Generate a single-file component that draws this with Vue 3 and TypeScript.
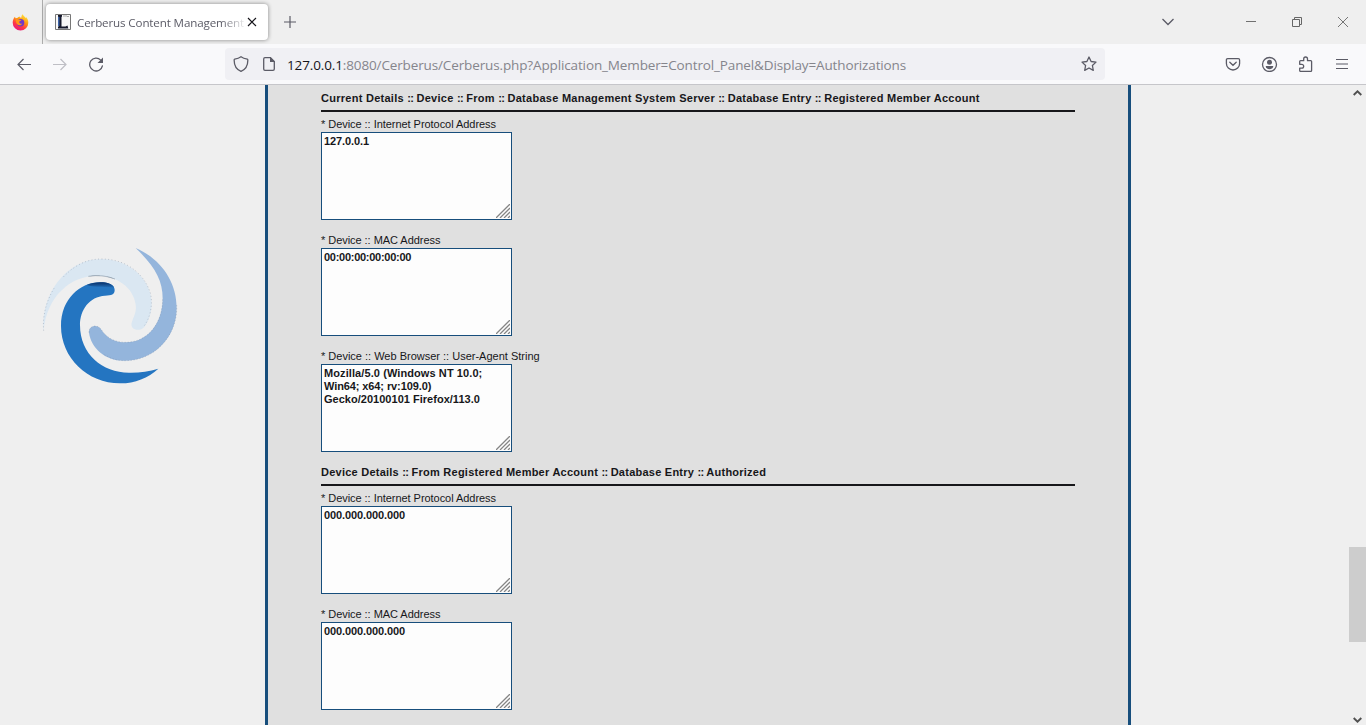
<script setup lang="ts">
interface Field {
  label: string
  lines: string[]
  kind: string
}
interface Section {
  title: string[]
  kind: string
  fields: Field[]
}

const sections: Section[] = [
  {
    title: [
      'Current Details ',
      ' Device ',
      ' From ',
      ' Database Management System Server ',
      ' Database Entry ',
      ' Registered Member Account',
    ],
    kind: 'current',
    fields: [
      { label: '* Device :: Internet Protocol Address', lines: ['127.0.0.1'], kind: 'ip' },
      { label: '* Device :: MAC Address', lines: ['00:00:00:00:00:00'], kind: 'mac' },
      {
        label: '* Device :: Web Browser :: User-Agent String',
        lines: ['Mozilla/5.0 (Windows NT 10.0;', 'Win64; x64; rv:109.0)', 'Gecko/20100101 Firefox/113.0'],
        kind: 'agent',
      },
    ],
  },
  {
    title: ['Device Details ', ' From Registered Member Account ', ' Database Entry ', ' Authorized'],
    kind: 'authorized',
    fields: [
      { label: '* Device :: Internet Protocol Address', lines: ['000.000.000.000'], kind: 'ip' },
      { label: '* Device :: MAC Address', lines: ['000.000.000.000'], kind: 'ip' },
    ],
  },
]
</script>

<template>
  <div class="window">
    <header class="tabs">
      <div class="pinned">
        <svg width="17" height="17" viewBox="0 0 17 17">
          <defs>
            <linearGradient id="fire" x1="0.8" y1="0" x2="0.25" y2="1">
              <stop offset="0" stop-color="#fff04a" />
              <stop offset="0.4" stop-color="#ff980e" />
              <stop offset="0.7" stop-color="#ff3647" />
              <stop offset="1" stop-color="#e31587" />
            </linearGradient>
          </defs>
          <path d="M.7 8.5C.7 6 1.8 4 3 2.7l.5 1.6 1.7-.2C6 3 7 2.5 7.700 2.400L8 3.500 9.500 3.500C9.200 2 10 .8 10.900.2c.3 1.800 2 2.500 3 3.900.2-.3.200-.7.100-1C15.500 4.500 16.300 6.500 16.300 8.700a7.800 7.800 0 0 1-15.600 0z" fill="url(#fire)" />
          <circle cx="8.600" cy="8.800" r="3.700" fill="#7139c9" />
          <path d="M3.500 5.500c1.500-.8 2.600-.4 3.600.3l2.300.3c-.3 1-1.600 1.200-2.100 1.500-.3 1.700 1 2.600 3 1.800-1 2.200-4 2.300-5.300.6-1-1.200-1-2.800-1.500-4.500z" fill="#ff9519" />
        </svg>
      </div>
      <div class="tab">
        <svg class="favicon" width="16" height="16" viewBox="0 0 16 16">
          <path d="M.5.5h15v15H.5z" fill="#f7f7f7" stroke="#777" />
          <path d="M3 1h4v1.500L6.500 3v9.500h4l2-1 .8 3H3V13l.5-.5V3L3 2.500z" fill="#15182b" />
          <path d="M3 3h1.500v9H3z" fill="#3d63a8" />
          <path d="M8 2h4M12 2.500h2" stroke="#aaa" />
        </svg>
        <span class="tab-title">Cerberus Content Management</span>
        <svg class="close" width="10" height="10" viewBox="0 0 10 10"><path d="M1 1l8 8M9 1L1 9" stroke="#15141a" stroke-width="1.150" /></svg>
      </div>
      <svg class="plus" width="12" height="12" viewBox="0 0 12 12"><path d="M6 0v12M0 6h12" stroke="#5b5b66" stroke-width="1.200" /></svg>
      <div class="window-controls">
        <svg width="14" height="12" viewBox="0 0 14 12"><path d="M1.500 3L7 8.500 12.500 3" fill="none" stroke="#5b5b66" stroke-width="1.300" /></svg>
        <svg width="10" height="12" viewBox="0 0 10 12"><path d="M0 5.500h10" stroke="#707070" /></svg>
        <svg width="10" height="12" viewBox="0 0 10 12"><path d="M.5 3.500h7v7h-7zM2.500 3.500v-2h7v7h-2" fill="none" stroke="#666" /></svg>
        <svg width="10" height="12" viewBox="0 0 10 12"><path d="M0 1l10 10M10 1L0 11" stroke="#666" stroke-width=".9" /></svg>
      </div>
    </header>

    <nav class="toolbar">
      <svg class="back" width="16" height="16" viewBox="0 0 16 16"><path d="M15 8.500H2M7.500 3L2 8.500 7.500 14" fill="none" stroke="#5b5b66" stroke-width="1.200" /></svg>
      <svg class="forward" width="16" height="16" viewBox="0 0 16 16"><path d="M1 8.500h13M8.500 3L14 8.500 8.500 14" fill="none" stroke="#bfbfc5" stroke-width="1.200" /></svg>
      <svg class="reload" width="16" height="16" viewBox="0 0 16 16">
        <path d="M12.700 4.100A6.400 6.400 0 1 0 14.400 9.800" fill="none" stroke="#5b5b66" stroke-width="1.300" stroke-linecap="round" />
        <path d="M15 1.500V7H9.500z" fill="#5b5b66" />
      </svg>
      <div class="urlbar">
        <svg width="16" height="16" viewBox="0 0 16 16"><path d="M8 .8c2 1.500 4 2 6.300 2.300.4.100.500.300.500.600C15 9 12.500 13.500 8 15.300 3.500 13.500 1 9 1.200 3.700c0-.3.100-.5.500-.6C4 2.800 6 2.300 8 .8z" fill="none" stroke="#5b5b66" stroke-width="1.300" /></svg>
        <svg class="page-icon" width="16" height="16" viewBox="0 0 16 16">
          <path d="M9.500 1.700H4C3 1.700 2.700 2.200 2.700 3v10c0 .9.500 1.300 1.300 1.300h8c.8 0 1.300-.5 1.300-1.300V5.500z" fill="none" stroke="#5b5b66" stroke-width="1.300" />
          <path d="M9 1l5 5H9z" fill="#5b5b66" />
        </svg>
        <span class="url"><b>127.0.0.1</b>:8080/Cerberus/Cerberus.php?Application_Member=Control_Panel&amp;Display=Authorizations</span>
        <svg class="star" width="16" height="16" viewBox="0 0 16 16"><path d="M8 1l2.100 4.500 4.900.600-3.600 3.400.9 4.900L8 12l-4.300 2.400.9-4.900L1 6.100l4.900-.6z" fill="none" stroke="#5b5b66" stroke-width="1.300" stroke-linejoin="round" /></svg>
      </div>
      <div class="actions">
        <svg width="16" height="16" viewBox="0 0 16 16"><path d="M2.700 2.600h10.600c.8 0 1.300.5 1.300 1.300v3.500a6.600 6.600 0 0 1-13.200 0V3.900c0-.8.500-1.300 1.300-1.300zM4.800 6.300L8 9.300l3.200-3" fill="none" stroke="#5b5b66" stroke-width="1.300" stroke-linecap="round" /></svg>
        <svg width="17" height="16" viewBox="0 0 17 16">
          <circle cx="8.500" cy="8.500" r="7" fill="none" stroke="#5b5b66" stroke-width="1.300" />
          <circle cx="8.500" cy="6.300" r="2.500" fill="#5b5b66" />
          <path d="M4.700 10h7.600c0 2-1.700 3.200-3.800 3.200S4.700 12 4.700 10z" fill="#5b5b66" />
        </svg>
        <svg width="16" height="16" viewBox="0 0 16 16"><path d="M1.700 8.300V5.600c0-.600.300-.9.900-.9h3.100V2.900a1.900 1.900 0 0 1 3.800 0v1.800h3.200c.600 0 .9.300.9.900v8.900c0 .600-.3.900-.9.900H2.600c-.600 0-.9-.3-.9-.9v-2.400h2.100a1.900 1.900 0 0 0 0-3.800z" fill="none" stroke="#5b5b66" stroke-width="1.300" stroke-linejoin="round" /></svg>
        <svg width="16" height="16" viewBox="0 0 16 16"><path d="M2 3.500h12M2 8h12M2 12.500h12" stroke="#5b5b66" stroke-width="1.200" /></svg>
      </div>
    </nav>

    <main class="page">
      <aside class="side">
        <svg class="logo" width="160" height="160" viewBox="0 0 480 480">
          <defs>
            <linearGradient id="shade" x1="0" y1="0" x2="0" y2="1">
              <stop offset="0" stop-color="#082f68" />
              <stop offset="1" stop-color="#2475c1" />
            </linearGradient>
          </defs>
          <path d="M41 287C31 180 108 72 213 72c88 0 153 65 152 135-1 28-9 52-22 69-16 17-46 7-37-16 6-18 14-29 11-51-6-52-57-87-117-87-78 0-150 62-159 165z" fill="#dae7f2" />
          <path d="M41 287c-4-45 8-90 33-130M100 126c35-36 70-54 115-54 75 0 129 45 147 105 7 38-3 75-22 99" fill="none" stroke="#8e9baa" stroke-width="1.500" stroke-dasharray="3 7" />
          <path d="M175 124q45-6 80 8-40-16-80-8z" fill="#627180" stroke="#8795a3" />
          <path d="M317 39c76 33 123 101 123 179 0 91-70 160-160 159-54 0-97-38-103-84-1-22 26-27 37-9 18 27 43 38 73 38 67 0 110-58 111-130 0-60-27-101-81-153z" fill="#94b5dc" />
          <path d="M440 210c4 82-57 166-155 167-25 0-49-9-66-21M177 293c-1-22 26-27 37-9 18 27 43 38 73 38 67 0 111-58 111-130" fill="none" stroke="#8292aa" stroke-width="1.200" stroke-dasharray="4 5" />
          <path d="M385 401c-30 28-71 44-113 44C173 446 93 369 93 273c0-82 58-130 116-131 25-1 45 7 45 23 0 14-9 16-29 17-47 3-75 42-75 89 0 89 71 145 153 142 29 0 55-4 82-12z" fill="#2475c1" />
          <path d="M170 150c30-13 78-10 82 9-23-5-52 0-82-9z" fill="url(#shade)" />
        </svg>
      </aside>
      <div class="panel">
        <section v-for="section in sections" :key="section.kind">
          <h2 :class="section.kind"><template v-for="(part, i) in section.title" :key="i"><span v-if="i > 0" class="sep">::</span>{{ part }}</template></h2>
          <div v-for="field in section.fields" :key="field.label" class="field" :class="field.kind">
            <label>{{ field.label }}</label>
            <div class="box">
              <div v-for="line in field.lines" :key="line" class="line">{{ line }}</div>
              <svg class="grip" width="14" height="14" viewBox="0 0 14 14"><path d="M0 14L14 0M4 14L14 4M8 14l6-6M12 14l2-2" stroke="#858585" stroke-width="1.300" /></svg>
            </div>
          </div>
        </section>
      </div>
      <div class="scrollbar">
        <svg width="9" height="6" viewBox="0 0 9 6"><path d="M.7 5L4.500 1.300 8.300 5" fill="none" stroke="#505050" stroke-width="1.900" /></svg>
        <div class="thumb"></div>
        <svg width="9" height="6" viewBox="0 0 9 6"><path d="M.7 1l3.800 3.700L8.300 1" fill="none" stroke="#505050" stroke-width="1.900" /></svg>
      </div>
    </main>
  </div>
</template>

<style>
body {
  margin: 0;
  overflow: hidden;
}
</style>

<style scoped>
* {
  box-sizing: border-box;
}
svg {
  display: block;
  flex: none;
}
.window {
  width: 1366px;
  height: 725px;
  display: flex;
  flex-direction: column;
  overflow: hidden;
  background: #efefef;
  font-family: "Open Sans", "Noto Sans", sans-serif;
}
.tabs {
  height: 44px;
  flex: none;
  display: flex;
  align-items: center;
  background: #efefef;
}
.pinned {
  width: 43px;
  height: 44px;
  display: flex;
  align-items: center;
  padding-left: 12px;
  border-right: 1px solid #acacac;
}
.tab {
  width: 222px;
  height: 36px;
  margin-left: 3px;
  padding-left: 9px;
  display: flex;
  align-items: center;
  background: #fff;
  border-radius: 4px;
  box-shadow: 0 0 4px rgba(0, 0, 0, 0.45);
}
.tab-title {
  margin-left: 6px;
  padding-top: 2px;
  width: 167px;
  white-space: nowrap;
  font-size: 11.6px;
  letter-spacing: -0.13px;
  line-height: 18px;
  color: #5b5b66;
  mask-image: linear-gradient(to right, #000 144px, transparent 170px);
}
.close {
  margin-left: 3px;
}
.plus {
  margin-left: 16px;
}
.window-controls {
  margin-left: auto;
  margin-right: 18px;
  display: flex;
  align-items: center;
}
.window-controls svg + svg {
  margin-left: 36px;
}
.window-controls svg:nth-child(2) {
  margin-left: 71px;
}
.toolbar {
  height: 41px;
  flex: none;
  display: flex;
  align-items: center;
  padding-left: 16px;
  background: #f9f9fb;
  border-bottom: 1px solid #c6c6ca;
}
.forward {
  margin-left: 20px;
}
.reload {
  margin-left: 20px;
}
.urlbar {
  margin-left: 121px;
  width: 880px;
  height: 32px;
  display: flex;
  align-items: center;
  padding: 0 8px;
  border-radius: 4px;
  background: #f0f0f4;
}
.page-icon {
  margin-left: 12px;
}
.url {
  margin-left: 10px;
  padding-top: 2px;
  white-space: nowrap;
  font-size: 13.5px;
  letter-spacing: -0.13px;
  line-height: 20px;
  color: #85858c;
}
.url b {
  font-weight: 400;
  color: #15141a;
}
.star {
  margin-left: auto;
}
.actions {
  margin-left: auto;
  margin-right: 16px;
  display: flex;
  gap: 20px;
}
.page {
  height: 640px;
  display: flex;
  overflow: hidden;
}
.side {
  width: 265px;
  flex: none;
  padding: 150px 0 0 30px;
}
.panel {
  width: 866px;
  height: 640px;
  flex: none;
  padding: 5px 53px 0;
  border: solid #174e7c;
  border-width: 0 3px;
  background: #e0e0e0;
  overflow: hidden;
  font-family: "Liberation Sans", Arial, sans-serif;
  font-size: 11px;
  color: #17171a;
}
h2 {
  margin: 0 0 4px;
  height: 22px;
  border-bottom: 2px solid #17171a;
  font-size: 11px;
  font-weight: 700;
  line-height: 16px;
  white-space: nowrap;
}
.current {
  letter-spacing: 0.267px;
}
.authorized {
  letter-spacing: 0.24px;
}
.sep {
  letter-spacing: -0.66px;
}
.field {
  margin-bottom: 12px;
}
label {
  display: block;
  line-height: 16px;
  letter-spacing: -0.045px;
}
.agent label {
  letter-spacing: 0;
}
.box {
  position: relative;
  width: 191px;
  height: 88px;
  padding: 2px;
  border: 1px solid #174e7c;
  background: #fdfdfd;
  font-weight: 700;
}
.line {
  line-height: 13px;
  white-space: nowrap;
}
.ip .line {
  letter-spacing: -0.1px;
}
.mac .line {
  letter-spacing: -0.27px;
}
.agent .line {
  letter-spacing: 0.09px;
}
.agent .line:nth-child(2) {
  letter-spacing: -0.1px;
}
.agent .line:nth-child(3) {
  letter-spacing: 0.02px;
}
.grip {
  position: absolute;
  right: 1px;
  bottom: 1px;
}
.scrollbar {
  width: 17px;
  margin-left: auto;
  display: flex;
  flex-direction: column;
  align-items: center;
  padding: 5px 0 2px;
}
.thumb {
  width: 17px;
  height: 95px;
  margin: 451px 0 auto;
  background: #cdcdcd;
}
</style>
